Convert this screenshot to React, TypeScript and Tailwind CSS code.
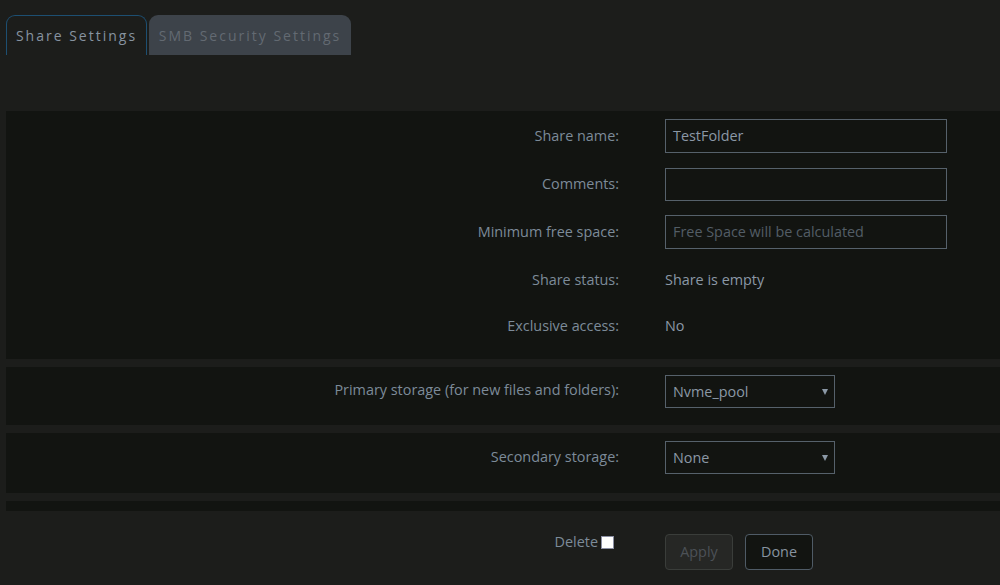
const labelCls = "text-right text-[14.4px] text-[#7d8b99]";

function TextRow({ label, children, last }: { label: string; children: React.ReactNode; last?: boolean }) {
  return (
    <div className={`grid grid-cols-[613px_282px] items-center gap-x-[46px] ${last ? "h-11" : "h-12"}`}>
      <div className={labelCls}>{label}</div>
      <div className="text-[14.4px] text-[#8b98a6]">{children}</div>
    </div>
  );
}

function Select({ value }: { value: string }) {
  return (
    <div className="relative flex h-[33px] w-[170px] items-center border border-[#56616b] bg-[#121411] px-[7px] text-[14.4px] text-[#8b98a6]">
      {value}
      <span className="absolute right-[6px] top-[13px] h-0 w-0 border-x-[3px] border-t-[6px] border-x-transparent border-t-[#8b98a6]" />
    </div>
  );
}

export default function App() {
  return (
    <div
      className="min-h-[585px] w-[1000px] overflow-hidden bg-[#1c1d1b]"
      style={{ fontFamily: '"Open Sans", sans-serif' }}
    >
      {/* tabs */}
      <div className="flex gap-[2px] px-[6px] pt-[15px]">
        <div className="flex h-[40px] w-[141px] items-center justify-center rounded-t-[9px] border border-b-0 border-[#1d4f72] text-[14px] tracking-[2px] text-[#8793a0]">
          Share Settings
        </div>
        <div className="flex h-[40px] w-[202px] items-center justify-center rounded-t-[9px] bg-[#3d434a] text-[14px] tracking-[2px] text-[#636a72]">
          SMB Security Settings
        </div>
      </div>

      <div className="ml-[6px] mt-[56px] flex flex-col gap-2">
        {/* share settings */}
        <div className="bg-[#121411] pb-[11px] pt-px">
          <TextRow label="Share name:">
            <div className="flex h-[34px] items-center border border-[#56616b] px-[7px]">TestFolder</div>
          </TextRow>
          <TextRow label="Comments:">
            <div className="h-[33px] border border-[#56616b]" />
          </TextRow>
          <TextRow label="Minimum free space:">
            <div className="flex h-[34px] items-center border border-[#56616b] px-[7px] text-[#535d66]">
              Free Space will be calculated
            </div>
          </TextRow>
          <TextRow label="Share status:">Share is empty</TextRow>
          <TextRow label="Exclusive access:" last>
            No
          </TextRow>
        </div>

        {/* primary storage */}
        <div className="grid grid-cols-[613px_282px] items-start gap-x-[46px] bg-[#121411] pb-[17px] pt-2">
          <div className={`${labelCls} pt-[4px]`}>Primary storage (for new files and folders):</div>
          <Select value="Nvme_pool" />
        </div>

        {/* secondary storage */}
        <div className="grid grid-cols-[613px_282px] items-start gap-x-[46px] bg-[#121411] pb-[19px] pt-2">
          <div className={`${labelCls} pt-[5px]`}>Secondary storage:</div>
          <Select value="None" />
        </div>

        <div className="h-[10px] bg-[#121411]" />
      </div>

      {/* actions */}
      <div className="ml-[6px] mt-[24px] grid grid-cols-[608px_auto] items-start gap-x-[51px]">
        <label className="-mt-[4px] flex items-center justify-end gap-[3px] text-[14.4px] text-[#7d8b99]">
          Delete
          <span className="mt-[1px] h-[13px] w-[13px] border border-[#8b8fa3] bg-white" />
        </label>
        <div className="mt-[-1px] flex gap-3">
          <button className="h-[36px] w-[68px] rounded-[4px] border border-[#3a3d3a] bg-[#262725] text-[14.4px] text-[#4c5157]">
            Apply
          </button>
          <button className="h-[36px] w-[68px] rounded-[4px] border border-[#4f5b66] bg-[#121411] text-[14.4px] text-[#8793a0]">
            Done
          </button>
        </div>
      </div>
    </div>
  );
}
